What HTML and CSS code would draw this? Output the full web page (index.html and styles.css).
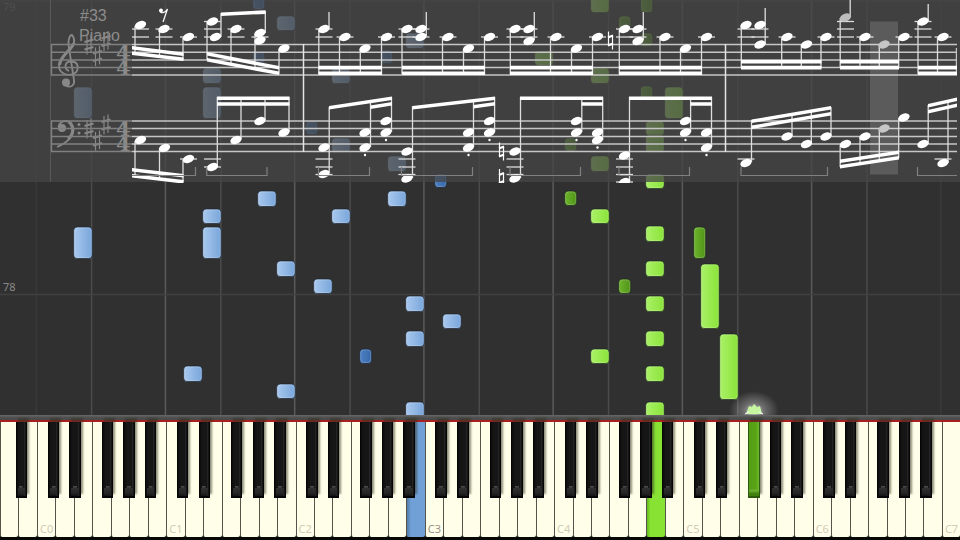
FILE: index.html
```
<!DOCTYPE html>
<html lang="en">
<head>
<meta charset="utf-8">
<meta name="viewport" content="width=device-width, initial-scale=1">
<title>Piano</title>
<link rel="stylesheet" href="styles.css">
</head>
<body>
<main class="player">
  <svg class="stage" viewBox="0 0 960 415" role="img" aria-label="Falling notes and score">
    <defs>
      <linearGradient id="blue"><stop offset="0" stop-color="#a9c9ee"/><stop offset="1" stop-color="#78a5da"/></linearGradient>
      <linearGradient id="blue-dark"><stop offset="0" stop-color="#4c80c4"/><stop offset="1" stop-color="#3768a8"/></linearGradient>
      <linearGradient id="green"><stop offset="0" stop-color="#aaf168"/><stop offset="1" stop-color="#8ae338"/></linearGradient>
      <linearGradient id="green-dark"><stop offset="0" stop-color="#6db52b"/><stop offset="1" stop-color="#509318"/></linearGradient>
      <radialGradient id="glow"><stop offset="0" stop-color="#fff" stop-opacity=".75"/><stop offset=".4" stop-color="#fff" stop-opacity=".3"/><stop offset="1" stop-color="#fff" stop-opacity="0"/></radialGradient>
      <clipPath id="score-clip"><rect width="957" height="183"/></clipPath>
      <g id="sharp"><path d="M-2-8.500V10M2-10V8.500" class="thin"/><path d="M-4.500-2.500L4.500-5M-4.500 5L4.500 2.500" class="thick"/></g>
      <g id="natural"><path d="M-2-9V5M2-5V9" class="thin"/><path d="M-2.500-3L2.500-5M-2.500 5L2.500 3" class="thick"/></g>
    </defs>
    <g id="grid" class="grid"></g>
    <g id="falling"></g>
    <text class="measure" x="3" y="291">78</text>
    <text class="measure past" x="3" y="11">79</text>
    <rect class="veil" width="960" height="182"/>
    <g clip-path="url(#score-clip)">
      <g class="faded">
        <path class="line" d="M50.500 0V182"/>
        <text class="caption" x="80" y="21">#33</text>
        <text class="caption" x="79" y="41">Piano</text>
        <g class="signs">
          <path class="clef" d="M66 86C71 88 75 85 74 80L68.500 45C68 39 70 35 72 35C76 40 74 46 68 52C61 57 59 61 59 66C59 74 68 76 73 74C80 71 79 62 72 61.500C65 61 63 68 69 71"/>
          <circle cx="66" cy="82.500" r="4"/>
          <path class="clef-heavy" d="M74 43C73 48 60 56 59.500 65"/>
          <path class="clef" d="M58.500 127C59 119 73 118 73.500 130C73 138 66 143 57 147"/>
          <path class="clef-heavy" d="M69 122C75 127 73 135 68 139"/>
          <circle cx="62" cy="128" r="4"/><circle cx="79" cy="124.500" r="1.500"/><circle cx="79" cy="133" r="1.500"/>
          <use href="#sharp" x="89" y="44.500"/><use href="#sharp" x="97.500" y="56"/><use href="#sharp" x="106" y="41"/>
          <use href="#sharp" x="89" y="128.500"/><use href="#sharp" x="97.500" y="140.500"/><use href="#sharp" x="106" y="124.500"/>
        </g>
        <text class="time" x="116" y="60">4</text><text class="time" x="116" y="75">4</text>
        <text class="time" x="116" y="136">4</text><text class="time" x="116" y="151">4</text>
      </g>
      <g id="score" class="score"></g>
      <rect class="cursor" x="870" y="21.500" width="28" height="153"/>
    </g>
    <g class="spark">
      <ellipse cx="754" cy="411" rx="25" ry="20" fill="url(#glow)"/>
      <path d="M746 414L749 406L752 407L754 404L757 407L760 406L762 414Z" fill="#c6f6a0"/>
      <path d="M745 414l4-2M759 412l4 2" stroke="#fff"/>
    </g>
  </svg>
  <div class="rail"></div>
  <div class="keyboard" id="keyboard"></div>
</main>
<script src="script.js"></script>
</body>
</html>
```
FILE: styles.css
```
* { box-sizing: border-box; }

body {
  margin: 0;
  background: #000;
  overflow-x: hidden;
}

.player {
  display: flex;
  flex-direction: column;
  width: 100%;
  background: #303030;
}

.stage {
  display: block;
  width: 100%;
  height: auto;
}

.grid { stroke: #4b4b4b; stroke-width: 1.5; fill: none; }
.grid .octave { stroke: #5a5a5a; }
.grid .edge { stroke: #3a3a3a; }
.grid .bar { stroke: #404040; }

.note { stroke: #1c2026; stroke-opacity: 0.6; stroke-width: 1; }
.shine { fill: none; stroke: #fff; stroke-opacity: 0.18; stroke-width: 1; }
.note.blue { fill: url(#blue); }
.note.blue-dark { fill: url(#blue-dark); }
.note.green { fill: url(#green); }
.note.green-dark { fill: url(#green-dark); }

.measure {
  fill: #8a8a8a;
  font: 11px "Noto Sans", "Open Sans", sans-serif;
}

.measure.past { fill: #686868; }

.veil { fill: #464646; fill-opacity: 0.76; }

.caption {
  fill: #8c8c8c;
  font: 16px "Liberation Sans", Arial, sans-serif;
}

.time {
  fill: #8a8a8a;
  font: bold 21px "DejaVu Serif", serif;
}

.signs { fill: #888; stroke: none; }
.clef { fill: none; stroke: #888; stroke-width: 1.8; }
.clef-heavy { fill: none; stroke: #888; stroke-width: 3; }
.thin { fill: none; stroke-width: 1.2; }
.thick { fill: none; stroke-width: 2.2; }
.signs use { stroke: #888; }
.faded .line { stroke: #585858; fill: none; }

.score { fill: #fff; }
.score .staff { stroke: #c6c6c6; stroke-width: 1.4; }
.score .staff.dim { stroke: #808080; }
.score .stem { stroke: #ddd; stroke-width: 1.3; }
.score .ledger { stroke: #ddd; stroke-width: 1.3; }
.score .barline { stroke: #e4e4e4; stroke-width: 1.5; }
.score .pedal { fill: none; stroke: #808080; stroke-width: 1.2; }
.score .played { fill: #bdbdbd; }
.score use { stroke: #fff; }
.score .rest { fill: none; stroke: #fff; stroke-width: 1.2; }

.cursor { fill: #fff; fill-opacity: 0.14; }

.rail {
  height: 5px;
  background: linear-gradient(#696969, #505050 50%, #494949);
}

.keyboard {
  display: flex;
  width: 100%;
  aspect-ratio: 960 / 120;
  padding-bottom: 3px;
  border-top: 2px solid #a82020;
  background: #050805;
}

.slot {
  position: relative;
  flex: 1 1 0;
  min-width: 0;
}

.white,
.black {
  display: block;
  margin: 0;
  padding: 0;
  border: 0;
  cursor: pointer;
}

.white {
  display: flex;
  align-items: flex-end;
  width: 100%;
  height: 100%;
  padding: 0 0 0 2px;
  border-left: 1px solid #55554c;
  border-radius: 0 0 2px 2px;
  background: #fffee8;
  color: #cfccb7;
  font: 11px/16px "Noto Sans", "Open Sans", sans-serif;
}

.white.middle { color: #96948a; }
.white.blue { background: linear-gradient(90deg, #527ba9, #70a0d5 22%, #70a0d5); }
.white.green { background: linear-gradient(90deg, #64b71f, #88e233 18%, #88e233); }

.black {
  position: absolute;
  z-index: 1;
  top: 0;
  width: 62%;
  height: 66%;
  border: 1px solid #050505;
  border-width: 0 1px 2px;
  background:
    linear-gradient(#505050, #303030) 50% 89% / 40% 3% no-repeat,
    linear-gradient(#303030, #202020) 50% 98% / 80% 9% no-repeat,
    linear-gradient(90deg, #0c0c0c, #161616 30%, #161616 80%, #262626 84%, #0c0c0c);
  box-shadow: 2px -4px 2px rgba(50, 50, 35, 0.55);
}

.black.green {
  border-color: #2d5a10;
  background: linear-gradient(transparent 91%, #73b73a 92%, #407f0d 97%), linear-gradient(90deg, #559d17, #58a414 70%, #70b735);
}

.on-cs { left: 58%; }
.on-ds { left: 75%; }
.on-fs { left: 51%; }
.on-gs { left: 68%; }
.on-as { left: 84%; }
```
FILE: script.js
```
const SVG = "http://www.w3.org/2000/svg";
const byId = (id) => document.getElementById(id);

function add(parent, tag, attrs) {
  const node = document.createElementNS(SVG, tag);
  for (const key in attrs) node.setAttribute(key, attrs[key]);
  parent.appendChild(node);
  return node;
}

/* Grid: one line at each C and each F */
const WHITE = 960 / 52;
const grid = byId("grid");
for (let i = 2; i < 52; i += 7) {
  add(grid, "path", { d: `M${i * WHITE - 0.7} 0V415`, class: i === 2 || i === 51 ? "edge" : "octave" });
  if (i + 3 < 52) add(grid, "path", { d: `M${(i + 3) * WHITE - 0.7} 0V415` });
}
for (const y of [1, 294.5]) add(grid, "path", { d: `M0 ${y}H960`, class: "bar" });

/* Falling notes: left, top, bottom */
const falling = {
  blue: [
    [74, 87, 118], [203, 68, 83], [203, 87, 118], [277, 16, 30], [332, 68, 83], [406, 33, 48], [332, 138, 152],
    [388, 156, 171], [258, 191, 206], [203, 209, 223], [203, 227, 258], [74, 227, 258], [277, 261, 276],
    [314, 279, 293], [332, 209, 223], [388, 191, 206], [406, 296, 311], [443, 314, 328], [406, 331, 346],
    [184, 366, 381], [277, 384, 398], [406, 402, 420]
  ],
  "blue-dark": [
    [253, -4, 9], [253, 51, 64], [381, 50, 63], [306, 121, 134], [435, 174, 187], [360, 349, 363]
  ],
  green: [
    [591, -4, 12], [535, 51, 65], [591, 68, 83], [665, 87, 118], [646, 121, 135], [646, 135, 152], [591, 156, 171],
    [646, 174, 188], [591, 209, 223], [646, 226, 241], [646, 261, 276], [646, 296, 311], [646, 331, 346],
    [646, 366, 381], [646, 402, 420], [591, 349, 363], [701, 264, 328], [720, 334, 399]
  ],
  "green-dark": [
    [619, 16, 30], [641, -4, 12], [641, 33, 46], [641, 86, 99], [565, 138, 151], [565, 191, 205],
    [619, 279, 293], [694, 227, 258]
  ]
};
for (const kind in falling) {
  const width = kind.endsWith("dark") ? 12 : 18.5;
  for (const [left, top, bottom] of falling[kind]) {
    const x = left - 0.3;
    const height = bottom - top + 0.5;
    add(byId("falling"), "rect", { x, y: top, width, height, rx: 3.6, class: `note ${kind}` });
    add(byId("falling"), "rect", { x: x + 1, y: top + 1, width: width - 2, height: height - 2, rx: 3, class: "shine" });
  }
}

/* Score */
const score = byId("score");
const line = (cls, d) => add(score, "path", { class: cls, d });
const staves = [[44.5, 52.2, 60, 67.5, 75], [121, 128.5, 136.5, 144, 151.5]];
for (const staff of staves) {
  for (const y of staff) {
    line("staff dim", `M51 ${y}H132`);
    line("staff", `M132 ${y}H957`);
  }
  line("staff dim", `M51.5 ${staff[0]}V${staff[4]}`);
}
line("barline", "M303.500 44V152");
line("barline", "M725.500 44V152");
line("staff", "M956.500 48V75");

/* Ledger lines: centre x, then the heights */
const ledgers = [
  [140.5, 29, 37], [164, 37, 29], [188.5, 37], [212.5, 21.5, 29, 37], [236, 37, 29], [260, 37], [324, 29, 37],
  [345, 37], [386.5, 37], [407, 29, 37], [421, 29, 37], [448, 37], [489.5, 37], [515, 29, 37], [529, 29, 37],
  [556, 37], [597.5, 37], [624.5, 29, 37], [638, 29, 37], [665, 37], [706.5, 37], [746, 29, 37], [760, 29, 37],
  [787, 37], [826, 37], [845.5, 21.5, 29, 37], [865, 37], [904, 37], [923, 21.5, 29, 37], [943, 37],
  [188.5, 159], [212.5, 159, 167], [324, 159, 167, 174.5], [407, 159, 167, 174.5], [515, 159, 167, 174.5],
  [624.5, 159, 167, 174.5, 182], [746, 159], [943, 159]
];
for (const [x, ...ys] of ledgers) for (const y of ys) line("ledger", `M${x - 8.5} ${y}h17`);

/* Stems: x, top, bottom */
const stems = [
  [135, 26, 52], [159.5, 30, 56], [183, 38, 60], [207, 22, 60], [221, 13, 37], [231, 30, 65], [255, 34, 70],
  [265.3, 11, 33], [279, 49, 74], [318.8, 30, 74], [339.5, 38, 74], [360.3, 49, 74], [381.5, 38, 74], [329, 12, 28],
  [402, 30, 74], [442.5, 38, 74], [463.5, 49, 74], [484.5, 38, 74], [426.3, 12, 36], [510.3, 30, 74],
  [550.5, 38, 74], [571.5, 49, 74], [592.5, 38, 74], [534.3, 12, 40], [619.3, 30, 74], [660, 38, 74],
  [680.5, 49, 74], [701.5, 38, 74], [643.3, 12, 40], [741.3, 26, 68], [781.7, 38, 68], [801.3, 45, 68],
  [821, 38, 68], [765.2, 8, 44], [840.2, 18, 68], [860, 38, 68], [879.3, 45, 68], [898.7, 38, 68], [850.2, 0, 17],
  [918, 22, 74], [937.5, 38, 74], [928.2, 4, 21],
  [135, 141, 178], [159.5, 149, 178], [183, 160, 182], [217.3, 97, 166], [241, 97, 139], [265, 97, 120],
  [289, 97, 132], [329.2, 107, 173], [370.5, 101, 147], [391.5, 97, 132], [412.5, 106, 178], [473.5, 101, 147],
  [494.6, 97, 132], [520.5, 97, 178], [581.8, 97, 132], [602.7, 97, 140], [629.5, 97, 182], [690.6, 97, 132],
  [711.5, 97, 147], [751.5, 120, 162], [792, 115, 136], [811.3, 112, 144], [831, 107, 136], [840.2, 145, 167],
  [860, 137, 164], [879.3, 129, 161], [898.7, 118, 158], [928.2, 105, 144], [948, 101, 163]
];
for (const [x, top, bottom] of stems) line("stem", `M${x} ${top}V${bottom}`);

/* Beams: x and top at each end */
const beams = [
  [132, 46, 183.5, 52.5], [132, 51.5, 183.5, 57.5], [207, 52, 279, 66], [207, 58, 279, 71.5],
  [221, 12.5, 265.5, 10.3], [132, 168, 183.5, 174], [132, 174, 183.5, 180],
  [217, 96.5, 289.5, 96.5], [217, 102.2, 289.5, 102.2],
  [329, 106, 392, 96.5], [370.5, 105.5, 392, 102], [412.5, 106, 495, 96.5], [473.5, 105, 495, 102],
  [520, 96.5, 603, 96.5], [581.5, 102.2, 603, 102.2], [629, 96.5, 712, 96.5], [690.5, 102.2, 712, 102.2],
  [751.5, 119.5, 831, 106], [751.5, 125.5, 831, 112], [840, 159.5, 899, 150.5], [840, 165, 899, 156],
  [928, 104, 957, 97.5], [928, 110, 957, 103.5]
];
for (const [a, b] of [[318.5, 382], [402, 485], [510, 593], [619, 702], [918, 957]]) {
  beams.push([a, 65.8, b, 65.8], [a, 71.5, b, 71.5]);
}
for (const [a, b] of [[741, 821.5], [840, 899]]) beams.push([a, 60, b, 60], [a, 65.8, b, 65.8]);
for (const [a, b, c, d] of beams) line("beam", `M${a} ${b}L${c} ${d}v3.600L${a} ${b + 3.6}Z`);

/* Note heads */
const heads = [
  [140.5, 25], [164, 29], [188.5, 37], [212.5, 21.5], [215.5, 37], [236, 29], [260, 33], [260, 40.5], [284, 48.5],
  [324, 29], [345, 37], [365, 48.5], [386.5, 37], [407, 29], [421, 29], [421, 37], [448, 37], [468.5, 48.5],
  [489.5, 37], [515, 29], [529, 29], [529, 41], [556, 37], [576.5, 48.5], [597.5, 37], [624.5, 29], [638, 29],
  [638, 41], [665, 37], [685.5, 48.5], [706.5, 37], [746, 25], [760, 25], [760, 44.5], [787, 37], [806.5, 44.5],
  [826, 37], [845.5, 17.5, 1], [865, 37], [884, 44.5, 1], [904, 37], [923, 21.5], [943, 37],
  [140.5, 140], [164.5, 148], [188.5, 159], [212.5, 167], [236, 140], [260, 121], [284, 132.5], [324, 147.5],
  [324, 174], [365, 132.5], [365, 147.5], [386, 121], [386, 132.5], [407, 151.5], [407, 178.5], [468.5, 132.5],
  [468.5, 147.5], [489.5, 121], [489.5, 132.5], [515, 151.5], [515, 178.5], [576.5, 121], [576.5, 132.5],
  [597.5, 132.5], [597.5, 140], [624.5, 155.5], [624.5, 182], [685.5, 121], [685.5, 132.5], [706.5, 132.5],
  [706.5, 147.5], [746, 163], [787, 136.5], [806.5, 144], [826, 136.5], [845.5, 144], [865, 136.5],
  [884, 128.5, 1], [904, 117.5], [923, 144], [943, 163]
];
for (const [x, y, played] of heads) {
  add(score, "ellipse", {
    cx: x, cy: y, rx: 5.9, ry: 3.8, transform: `rotate(-22 ${x} ${y})`, class: played ? "played" : "head"
  });
}
for (const [x, y] of [[365, 155], [386, 140], [468.5, 155], [489.5, 140], [576.5, 140], [597.5, 147.5], [685.5, 140], [706.5, 155]]) {
  add(score, "circle", { cx: x, cy: y, r: 1.2 });
}
for (const [x, y] of [[610.5, 40.5], [501.5, 151.5], [501.5, 178]]) add(score, "use", { href: "#natural", x, y });
for (const [a, b] of [[206.7, 267], [318.5, 369.5], [401.5, 472.5], [510, 580.5], [619, 689.5], [741, 827.5]]) {
  line("pedal", `M${a} 167V175.500H${b}V167`);
}
line("pedal", "M132 175.500H195.500V167");
line("pedal", "M917.500 167V175.500H957");
line("rest", "M160 11C161 14 165 13 167.500 9L163 22");
add(score, "circle", { cx: 161, cy: 10.5, r: 2 });

/* Keyboard: 52 white keys from A; each slot holds the black key on its right */
const names = ["A", "B", "C", "D", "E", "F", "G"];
const sharps = { A: "as", C: "cs", D: "ds", F: "fs", G: "gs" };
const pressed = { 22: "blue", 35: "green" };
const pressedSharps = { 40: "green" };
for (let i = 0; i < 52; i++) {
  const name = names[i % 7];
  const octave = Math.floor((i - 2) / 7);
  const slot = document.createElement("div");
  slot.className = "slot";
  const white = document.createElement("button");
  white.type = "button";
  white.className = `white ${pressed[i] || ""} ${i === 23 ? "middle" : ""}`;
  white.setAttribute("aria-label", name + octave);
  if (name === "C") white.textContent = name + octave;
  slot.appendChild(white);
  if (sharps[name] && i < 51) {
    const black = document.createElement("button");
    black.type = "button";
    black.className = `black on-${sharps[name]} ${pressedSharps[i] || ""}`;
    black.setAttribute("aria-label", `${name}#${octave}`);
    slot.appendChild(black);
  }
  byId("keyboard").appendChild(slot);
}
```
